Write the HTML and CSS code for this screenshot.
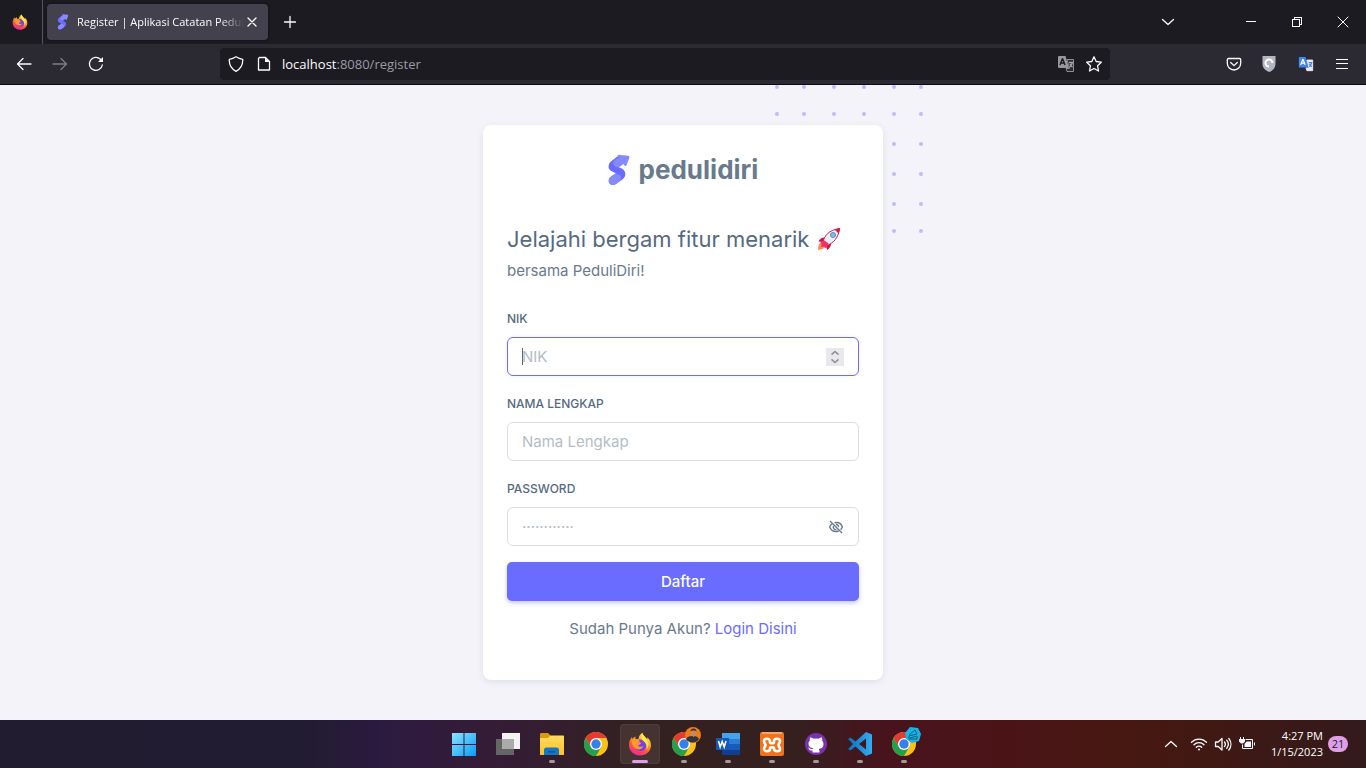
FILE: index.html
```html
<!DOCTYPE html>
<html lang="id">
<head>
<meta charset="utf-8">
<meta name="viewport" content="width=device-width, initial-scale=1">
<title>Register | Aplikasi Catatan PeduliDiri</title>
<link rel="stylesheet" href="styles.css">
</head>
<body>
<svg class="sprite" aria-hidden="true">
  <defs>
    <linearGradient id="fox-body" x1="0.8" y1="0" x2="0.3" y2="1"><stop offset="0" stop-color="#fff14f"/><stop offset="0.35" stop-color="#ffb12c"/><stop offset="0.65" stop-color="#ff5a36"/><stop offset="1" stop-color="#f0239a"/></linearGradient>
    <linearGradient id="win-blue" x1="0" y1="0" x2="1" y2="1"><stop offset="0" stop-color="#8be3fd"/><stop offset="1" stop-color="#0a9bfb"/></linearGradient>
    <linearGradient id="folder-yellow" x1="0" y1="0" x2="0" y2="1"><stop offset="0" stop-color="#ffdb62"/><stop offset="1" stop-color="#fcc127"/></linearGradient>
    <linearGradient id="code-blue" x1="0" y1="0" x2="1" y2="0"><stop offset="0" stop-color="#0b6fb8"/><stop offset="1" stop-color="#33adf2"/></linearGradient>
  </defs>
  <symbol id="logo" viewBox="0 0 22 32">
    <path fill="#696cff" d="M10 2 3 7.500C0 10 0 14 2 16c1.500 1.500 3.500 2.200 6 3.300L2.500 23C0 25 .5 28.500 2 30c1.500 1.300 4 1.200 6 0l7-5c2-1.800 2.700-4 2.200-6-.5-2.500-2.200-4-5-5.200l-2.500-1 6.500-4.600z"/>
    <path fill="#8789ff" d="m10.300.7 9.900 1c1 .1 1.500.8 1.200 1.700l-3 8c-.3.800-1 .9-1.600.3L15.500 10l-5 3.500c-3-1-6-2-5.500-5L8 5l3-1-1-1.500c-.6-1-.3-1.800.3-1.800z"/>
    <path fill="#8789ff" d="m8 19.300 3.500 1.700c2.500 1.500 2 3.500.5 5.800L8 30c-2 1.300-4.500 1.300-6 0-2-2-1.500-5.300.5-7z"/>
  </symbol>
  <symbol id="firefox" viewBox="0 0 24 24">
    <path fill="url(#fox-body)" d="M14.500.8c.2 3 3.500 4.200 4.700 7 .2-1 .1-2-.1-2.600 2.700 2.100 4 5.200 3.900 8.500C22.700 19.500 18 23.500 12 23.500S1 19 1 13c0-3 .8-5.500 3-8l.3 2c1-1.200 2-2 3.400-2.500-.4.800-.5 1.500-.4 2.500 1 0 2.200 0 3.200.3C10.700 4.700 12 2 14.500.8z"/>
    <path fill="#7542e5" d="M10.500 7.700c4-.7 7.700 2 7.700 5.700 0 3.400-2.500 5.600-5.900 5.600-3.300 0-5.700-2.200-5.800-5.200 1.100-2.500 2.500-2.800 5.400-3.300.3-.5-.5-1.600-1.400-2.800z"/>
    <path fill="#ff9a2a" d="M3.500 9.500c2-2 5-2.600 7-1.800-.8 1-1 1.800-.6 2.600l3.400.5c-.5 1.800-2.300 1.600-3.400 2.900 1.200 1.400 3.800 1.500 5.400.4-.7 2.400-3 3.700-5.500 3.200C6 16.500 4 13 3.500 9.500z"/>
    <path fill="#ffe84a" d="M14.500.8c.2 3 3.500 4.200 4.700 7 1.800 3.200 1.600 7.200-.7 10.200.9-4.500-.6-7-2.800-8.800C13.400 7.500 12.500 4 14.500.8z"/>
  </symbol>
  <symbol id="chrome" viewBox="0 0 24 24">
    <circle cx="12" cy="12" r="12" fill="#fbc116"/>
    <path fill="#e33b2e" d="M1.600 6A12 12 0 0 1 22.400 6H12L6.800 15z"/>
    <path fill="#22a04b" d="M1.600 6A12 12 0 0 0 12 24l5.200-9L12 17l-5.200-2z"/>
    <circle cx="12" cy="12" r="6" fill="#fff"/><circle cx="12" cy="12" r="4.700" fill="#3580ea"/>
  </symbol>
  <symbol id="translate" viewBox="0 0 18 18">
    <path class="tr-front" d="M2 1h6.500l3.500 12H2a1 1 0 0 1-1-1V2a1 1 0 0 1 1-1z"/>
    <path class="tr-back" d="M10 4.500h6.500v12H10L9 13.500h3.500z"/>
    <path class="tr-letter" d="m3 10 2.300-6h.4L8 10M4 8h3"/>
    <path class="tr-glyph" d="M12 7.500h4m-.7 0c-.2 2-1.200 3.400-2.600 4.500m.3-3c.6 1.500 1.400 2.500 2.500 3"/>
  </symbol>
</svg>

<header class="browser">
  <div class="tabbar">
    <button class="pinned" aria-label="Firefox View"><svg class="i16"><use href="#firefox"/></svg></button>
    <div class="tab">
      <svg class="tab-logo"><use href="#logo"/></svg>
      <span class="tab-title">Register | Aplikasi Catatan PeduliDiri</span>
      <button class="tab-close" aria-label="Close tab"><svg class="i16 line" viewBox="0 0 16 16"><path d="m4 4 8 8m0-8-8 8"/></svg></button>
    </div>
    <button class="tool" aria-label="New tab"><svg class="i16 line" viewBox="0 0 16 16"><path d="M8 2.500v11M2.500 8h11"/></svg></button>
    <button class="tool tab-list" aria-label="List all tabs"><svg class="i16 line" viewBox="0 0 16 16"><path d="m2.500 5.500 5.500 5 5.500-5"/></svg></button>
    <button class="win" aria-label="Minimize"><svg class="i16 crisp" viewBox="0 0 16 16"><path d="M3 7.500h10"/></svg></button>
    <button class="win" aria-label="Restore"><svg class="i16 crisp" viewBox="0 0 16 16"><path d="M3.500 5.500h7v7h-7zM5.500 5V3.500h7v7H11"/></svg></button>
    <button class="win" aria-label="Close"><svg class="i16 fine" viewBox="0 0 16 16"><path d="m3 3 10 10m0-10L3 13"/></svg></button>
  </div>
  <div class="toolbar">
    <nav class="tools">
      <button class="tool" aria-label="Back"><svg class="i16 line" viewBox="0 0 16 16"><path d="M15 8H1.500M7 2.500 1.500 8 7 13.500"/></svg></button>
      <button class="tool faded" aria-label="Forward"><svg class="i16 line" viewBox="0 0 16 16"><path d="M1 8h13.500M9 2.500 14.500 8 9 13.500"/></svg></button>
      <button class="tool" aria-label="Reload"><svg class="i16 line" viewBox="0 0 16 16"><path d="M14.300 9A6.500 6.500 0 1 1 12.500 3.300L14 5"/><path class="solid" d="M15 1v5h-5z"/></svg></button>
    </nav>
    <div class="urlbar">
      <svg class="i16 line" viewBox="0 0 16 16"><path d="M8 .8c2.500 1.600 4.500 2.200 6.700 2.500.3 5.200-1.700 9.500-6.700 12C3 12.800 1 8.500 1.300 3.300 3.500 3 5.500 2.400 8 .8z"/></svg>
      <svg class="i16 line page" viewBox="0 0 16 16"><path d="M3.500 1.500h6l4 4v8.500h-11V2.500z"/><path class="solid" d="M9 1.500V6h4.500z"/></svg>
      <p class="url"><b>localhost</b>:8080/register</p>
      <svg class="i18 translate gray"><use href="#translate"/></svg>
      <svg class="i18 line star" viewBox="0 0 18 18"><path d="m9 1.800 2.200 4.700 5.100.7-3.700 3.600.9 5.200L9 13.500 4.500 16l.9-5.200L1.700 7.200l5.100-.7z"/></svg>
    </div>
    <nav class="tools">
      <button class="tool" aria-label="Pocket"><svg class="i16 line" viewBox="0 0 16 16"><path d="M2.500 2.500h11c.8 0 1.200.5 1.200 1.200v3.600a6.700 6.700 0 0 1-13.400 0V3.700c0-.7.4-1.200 1.200-1.200zM4.700 6.500 8 9.600l3.300-3.100"/></svg></button>
      <button class="tool" aria-label="Privacy shield"><svg class="i16" viewBox="0 0 16 16"><path fill="#b3b5c3" d="M.5 0h13v8c0 3.500-2.500 6.500-6.500 8-4-1.500-6.500-4.500-6.500-8z"/><path fill="none" stroke="#fff" stroke-width="2" d="M10.500 7a3.500 3.500 0 1 0-3.500 3.500"/></svg></button>
      <button class="tool" aria-label="Translate"><svg class="i16 translate blue"><use href="#translate"/></svg></button>
      <button class="tool" aria-label="Menu"><svg class="i16 crisp" viewBox="0 0 16 16"><path d="M2 3.500h12M2 7.500h12M2 12.500h12"/></svg></button>
    </nav>
  </div>
</header>

<main class="page-body">
  <section class="card">
    <svg class="dots" viewBox="0 0 148 148" aria-hidden="true">
      <defs><g id="dot-row"><circle cx="2" cy="2" r="2"/><circle cx="29" cy="2" r="2"/><circle cx="59" cy="2" r="2"/><circle cx="89" cy="2" r="2"/><circle cx="119" cy="2" r="2"/><circle cx="146" cy="2" r="2"/></g></defs>
      <use href="#dot-row"/><use href="#dot-row" y="27"/><use href="#dot-row" y="57"/><use href="#dot-row" y="87"/><use href="#dot-row" y="117"/><use href="#dot-row" y="144"/>
    </svg>
    <div class="card-inner">
      <a class="brand" href="#"><svg class="brand-logo"><use href="#logo"/></svg><span>pedulidiri</span></a>
      <h1>Jelajahi bergam fitur menarik
        <svg class="rocket" viewBox="0 0 24 24" role="img" aria-label="Roket">
          <path fill="#ff8a55" d="M4 15c3 0 5 2.500 5 4.500C7 22 4 22.500 1 23c0-3 .5-6 3-8z"/>
          <path fill="#c2184b" d="M8.500 10.500C5.500 10 3 11.500 1.500 14.500L7 15zM14 15.500c.5 3-1 6-4 7.500l-1-6z"/>
          <path fill="#f2eef2" stroke="#d01c50" d="M6 15C7 9 12 3 22.500 1.500 22 10 16 17 9.500 18.500z"/>
          <path fill="#d01c50" d="M17.500 2.700 23.300.8 21.500 7c-1-2-2-3-4-4.300z"/>
          <path fill="#f52e66" d="m3.500 14.500 4-1 4 3-2.500 5-2-2-3 .5.500-3z"/>
          <circle cx="16" cy="8" r="2.500" fill="#82c1ed" stroke="#4d8fc5"/>
        </svg>
      </h1>
      <p class="lead">bersama PeduliDiri!</p>
      <form>
        <div class="field">
          <label for="nik">NIK</label>
          <div class="control focused">
            <input id="nik" type="number" placeholder="NIK">
            <span class="caret"></span>
            <svg class="spinner" viewBox="0 0 18 18" aria-hidden="true"><path d="M5.500 6.700 9 3.500l3.500 3.200M5.500 11.300 9 14.500l3.500-3.200"/></svg>
          </div>
        </div>
        <div class="field">
          <label for="nama">NAMA LENGKAP</label>
          <div class="control"><input id="nama" type="text" placeholder="Nama Lengkap"></div>
        </div>
        <div class="field">
          <label for="password">PASSWORD</label>
          <div class="control">
            <input id="password" type="password" placeholder="············">
            <button class="toggle" type="button" aria-label="Tampilkan password"><svg class="i16" viewBox="0 0 16 16"><path d="M2 2l12 12M4.500 4.500C3 5.500 2 6.800 1.700 8c1 2.800 3.300 4.500 6.300 4.500 1 0 1.900-.2 2.700-.5M6.500 3.700c4-.8 6.800 1 7.800 4.300-.3 1-.9 1.900-1.700 2.600M5.500 7c-.8 2 .7 4 2.900 3.500M8 5.500c1.700 0 2.700 1.200 2.500 2.700"/></svg></button>
          </div>
        </div>
        <button class="submit" type="submit">Daftar</button>
      </form>
      <p class="login">Sudah Punya Akun? <a href="#">Login Disini</a></p>
    </div>
  </section>
</main>

<footer class="taskbar">
  <div class="apps">
    <button class="app" aria-label="Start"><svg viewBox="0 0 24 24"><path fill="url(#win-blue)" d="M0 1h11.500v11H0zM12.500 1H24v11H12.500zM0 13h11.500v11H0zM12.500 13H24v11H12.500z"/></svg></button>
    <button class="app" aria-label="Task view"><svg viewBox="0 0 24 24"><path fill="#656565" d="M0 7h18v16H0z"/><path fill="#f2f2f2" d="M6 1h18v16H6z"/><path fill="#ababab" d="M6 7h12v10H6z"/></svg></button>
    <button class="app running" aria-label="File Explorer"><svg viewBox="0 0 24 24"><path fill="#d99b0b" d="M0 2.500C0 1.500.5 1 1.500 1H8l2.500 2.500V9H0z"/><path fill="url(#folder-yellow)" d="M0 6h8l2.500-2.500H23c.6 0 1 .4 1 1V23H0z"/><path fill="#1675c5" d="M4 23v-5c0-1.500 1-2.500 2.500-2.500h10c1.500 0 2.500 1 2.500 2.500v5z"/><path fill="#0d5798" d="M8 19h7v1.500H8z"/></svg></button>
    <button class="app" aria-label="Chrome"><svg><use href="#chrome"/></svg></button>
    <button class="app running active" aria-label="Firefox"><svg><use href="#firefox"/></svg></button>
    <button class="app running" aria-label="Chrome, profile 1"><svg><use href="#chrome"/></svg>
      <svg class="profile" viewBox="0 0 16 16"><circle cx="8" cy="8" r="8" fill="#ee7c1b"/><path fill="#33343b" d="M1 12c1-2 3-3 6-3s6 .5 7 3.300A8 8 0 0 1 1 12z"/><path fill="#c48a68" d="M6 3.500h5V8L8.500 10 6 8z"/><path fill="#3b302d" d="M5.500 4.500c0-4 6-4 6 0L10 3.500H7z"/></svg></button>
    <button class="app running" aria-label="Word"><svg viewBox="0 0 24 24"><path fill="#41a5ee" d="M6 1h18v6H6z"/><path fill="#2b7cd3" d="M6 7h18v5H6z"/><path fill="#185abd" d="M6 12h18v6H6z"/><path fill="#103f91" d="M6 18h18v5H6z"/><path fill="#1856b8" d="M0 6h13v12H0z"/><path fill="none" stroke="#fff" stroke-width="1.600" d="m2.500 9 1.700 6 2-5.500 2 5.500L10 9"/></svg></button>
    <button class="app running" aria-label="XAMPP"><svg viewBox="0 0 24 24"><rect width="24" height="24" rx="2" fill="#f0721d"/><path fill="#f9a468" d="M2 0h20v2H2z"/><path fill="none" stroke="#fff" stroke-width="2.600" stroke-linejoin="round" d="M10 10.500c0 1 4 1 4 0V9c0-3 6-3 6 0 0 2-1.500 2.500-1.500 4S20 15 20 17c0 3-6 3-6 0v-1c0-1-4-1-4 0v1c0 3-6 3-6 0 0-2 1.500-2.500 1.500-4S4 11 4 9c0-3 6-3 6 0z"/></svg></button>
    <button class="app running" aria-label="GitHub Desktop"><svg viewBox="0 0 24 24"><circle cx="12" cy="12" r="11" fill="#7b31ad"/><path fill="#fff" d="M6 5.500c1.500 0 2.700.7 3.500 1.300 1.700-.4 3.300-.4 5 0 .8-.6 2-1.300 3.500-1.300.4 1.200.4 2.200.1 3.100A5.500 5.500 0 0 1 19.500 12c0 3.500-2.300 4.700-4.700 5 .5.700.7 1.500.7 2.500v1h-7v-2c-2 .4-3-.3-3.500-1.500l-1-1.500c1.500 0 2 2 4.500 1.500l.7-.8c-2.500-.3-4.700-1.200-4.700-4.400 0-1.300.5-2.300 1.400-3.200-.3-.9-.3-1.900.1-3.100z"/></svg></button>
    <button class="app running" aria-label="Visual Studio Code"><svg viewBox="0 0 24 24"><path fill="url(#code-blue)" fill-rule="evenodd" d="m18 0 6 2.500v19L18 24 7.500 14.500 2.500 18.500 0 17l5-5-5-5 2.500-1.500 5 4zm0 6.500L11 12l7 5.500z"/></svg></button>
    <button class="app running" aria-label="Chrome, profile 2"><svg><use href="#chrome"/></svg>
      <svg class="profile" viewBox="0 0 16 16"><path fill="#18b4e8" d="m5 0 8 1 3 6-2 7-7 2-6-4L0 6z"/><path fill="none" stroke="#0b627f" d="m4 8 6-5 2 4-8 2v3h8V9l-7 2"/></svg></button>
  </div>
  <div class="tray">
    <svg class="i16 line" viewBox="0 0 16 16"><path d="m2.500 10.500 5.500-5 5.500 5"/></svg>
    <div class="status">
      <svg class="i18 line" viewBox="0 0 18 18"><path d="M1.500 7.300a10.500 10.500 0 0 1 15 0M4 9.800a7 7 0 0 1 10 0M6.300 12.200a3.800 3.800 0 0 1 5.400 0"/><circle class="solid" cx="9" cy="14.500" r="1"/></svg>
      <svg class="i18 line" viewBox="0 0 18 18"><path d="M1.500 7v4.500h2.700L8 15V3.500L4.200 7zM10.500 7c1 1.300 1 3.200 0 4.500M12.700 5.200c2 2.400 2 5.700 0 8.100M14.800 3.500c2.800 3.400 2.800 8.100 0 11.500"/></svg>
      <svg class="i18" viewBox="0 0 18 18"><path fill="none" stroke="#fbfbfe" d="M7.500 4.500h7v9h-10v-4M16.500 7.500v3"/><path class="solid" d="M2 2h1v2h2V2h1v2h1v2.500L5 8.500H3L1 6.500V4h1zM8.500 6.500H13V12H6.500V9z"/></svg>
    </div>
    <p class="clock"><span>4:27 PM</span><span>1/15/2023</span></p>
    <span class="badge">21</span>
  </div>
</footer>
</body>
</html>
```

FILE: styles.css
```css
* { box-sizing: border-box; }
body {
  margin: 0;
  min-height: 100vh;
  display: flex;
  flex-direction: column;
  background: #f4f3f9;
  color: #697a8d;
  font: 15px/24px Inter, "Liberation Sans", sans-serif;
}
h1, p { margin: 0; }
button { padding: 0; border: 0; background: none; font: inherit; color: inherit; }
a { color: #696cff; text-decoration: none; }
svg { display: block; flex: none; }
.sprite { position: absolute; width: 0; height: 0; }
.i16 { width: 16px; height: 16px; }
.i18 { width: 18px; height: 18px; }
.line, .fine, .crisp { fill: none; stroke: #fbfbfe; stroke-width: 1.3; stroke-linecap: round; stroke-linejoin: round; }
.fine { stroke-width: 1; }
.crisp { stroke-width: 1; stroke-linecap: butt; shape-rendering: crispEdges; }
.solid { fill: #fbfbfe; stroke: none; }

/* Browser frame */
.browser { border-bottom: 1px solid #0b0b10; font-family: "Open Sans", sans-serif; color: #fbfbfe; }
.tabbar { display: flex; align-items: center; height: 44px; background: #1c1b22; }
.pinned { display: grid; place-items: center; width: 43px; padding-right: 2px; align-self: stretch; border-right: 1px solid #55545e; }
.tab {
  display: flex;
  align-items: center;
  width: 221px;
  height: 36px;
  margin: 0 6px 0 4px;
  padding: 0 8px;
  border-radius: 4px;
  background: #42414d;
  box-shadow: 0 0 3px #0009;
}
.tab-logo { width: 16px; height: 16px; margin-right: 6px; }
.tab-title {
  flex: 1;
  overflow: hidden;
  white-space: nowrap;
  font-size: 11px;
  mask-image: linear-gradient(to left, transparent, #000 24px);
}
.tab-close { display: grid; place-items: center; }
.tool { display: grid; place-items: center; width: 32px; height: 32px; }
.tab-list { margin: 0 44px 0 auto; }
.win { display: grid; place-items: center; width: 46px; height: 44px; }
.toolbar { display: flex; align-items: center; justify-content: space-between; gap: 108px; height: 40px; padding: 0 8px; background: #2b2a33; }
.tools { display: flex; gap: 4px; }
.faded { opacity: 0.4; }
.urlbar { display: flex; align-items: center; flex: 1; height: 32px; padding: 0 7px 0 8px; border-radius: 4px; background: #1c1b22; }
.page { margin: 0 10px 0 12px; }
.url { flex: 1; font-size: 13px; color: #9a9aa2; }
.url b { font-weight: 400; color: #fbfbfe; }
.star { margin-left: 10px; }
.tr-letter, .tr-glyph { fill: none; stroke-width: 1.4; }
.gray { --front: #96969b; --back: #2b2a33; --edge: #8e8e94; --letter: #1c1b22; --glyph: #a5a5aa; }
.blue { --front: #4285f4; --back: #e9edf5; --edge: #e9edf5; --letter: #ffffff; --glyph: #4285f4; }
.tr-front { fill: var(--front); }
.tr-back { fill: var(--back); stroke: var(--edge); }
.tr-letter { stroke: var(--letter); }
.tr-glyph { stroke: var(--glyph); }

/* Registration page */
.page-body { flex: 1; display: grid; place-items: center; padding: 40px 16px; overflow: hidden; }
.card { position: relative; width: 100%; max-width: 400px; }
.dots { position: absolute; top: -40px; right: -40px; width: 148px; fill: #bcbcff; }
.card-inner {
  position: relative;
  padding: 28px 24px 39px;
  border-radius: 8px;
  background: #fff;
  box-shadow: 0 2px 6px rgba(67, 89, 113, 0.12);
}
.brand { display: flex; align-items: center; justify-content: center; gap: 9px; height: 34px; margin-bottom: 36px; font-size: 26px; font-weight: 700; color: #697a8d; }
.brand-logo { width: 22px; height: 32px; }
h1 { display: flex; align-items: center; gap: 8px; height: 32px; margin-bottom: 4px; font-size: 22px; font-weight: 400; color: #566a7f; white-space: nowrap; }
.rocket { width: 24px; height: 24px; }
.lead { margin-bottom: 24px; }
.field { margin-bottom: 16px; }
label { display: block; height: 16px; margin-bottom: 14px; padding-top: 4px; font-size: 12px; line-height: 16px; font-weight: 500; color: #566a7f; }
.control { position: relative; display: flex; align-items: center; height: 39px; border: 1px solid #d9dee3; border-radius: 6px; background: #fff; }
.control.focused { border-color: #696cff; box-shadow: 0 0 4px rgba(105, 108, 255, 0.1); }
input {
  flex: 1;
  width: 100%;
  min-width: 0;
  height: 37px;
  padding: 0 14px;
  border: 0;
  outline: 0;
  background: none;
  font: inherit;
  color: #697a8d;
  appearance: textfield;
}
input::placeholder { color: #b4bdc6; opacity: 1; }
.caret { position: absolute; left: 14px; width: 1px; height: 17px; background: #566a7f; }
.spinner { width: 18px; height: 18px; margin-right: 14px; background: #e9e9ed; fill: none; stroke: #8f8f9d; stroke-width: 1.6; }
.toggle { margin-right: 14px; fill: none; stroke: #697a8d; stroke-width: 1.4; }
.submit { display: block; width: 100%; height: 39px; border-radius: 5px; background: #696cff; color: #fff; font-weight: 500; box-shadow: 0 2px 4px rgba(105, 108, 255, 0.4); }
.login { margin-top: 16px; text-align: center; }

/* Desktop taskbar */
.taskbar {
  display: grid;
  grid-template-columns: 1fr auto 1fr;
  align-items: center;
  height: 48px;
  background: linear-gradient(to right, #211c2f 0%, #221c33 23%, #2c1a40 28%, #341c38 35%, #33211f 48%, #35201f 58%, #48131d 65%, #4a1416 74%, #451810 84%, #331a1b 100%);
  font-family: "Open Sans", sans-serif;
  color: #fff;
}
.apps { grid-column: 2; display: flex; gap: 4px; padding-left: 2px; }
.app { position: relative; display: grid; place-items: center; width: 40px; height: 40px; border-radius: 4px; }
.app > svg { width: 24px; height: 24px; }
.app > .profile { position: absolute; top: 3px; right: 3px; width: 16px; height: 16px; }
.running::after { content: ""; position: absolute; bottom: 1px; left: 17px; width: 6px; height: 3px; border-radius: 2px; background: #a39a9b; }
.active { background: #443331; box-shadow: inset 0 0 0 1px #4d3c39; }
.active::after { left: 12px; width: 16px; background: #dda0e8; }
.tray { display: flex; align-items: center; justify-content: flex-end; padding-right: 18px; }
.status { display: flex; gap: 6px; margin: 0 13px 0 11px; }
.clock { display: grid; width: 54px; font-size: 11px; line-height: 16px; text-align: right; }
.badge { display: grid; place-items: center; width: 20px; height: 16px; margin-left: 5px; border-radius: 8px; background: #dda0e8; color: #2b1a30; font-size: 11px; line-height: 16px; }
```
